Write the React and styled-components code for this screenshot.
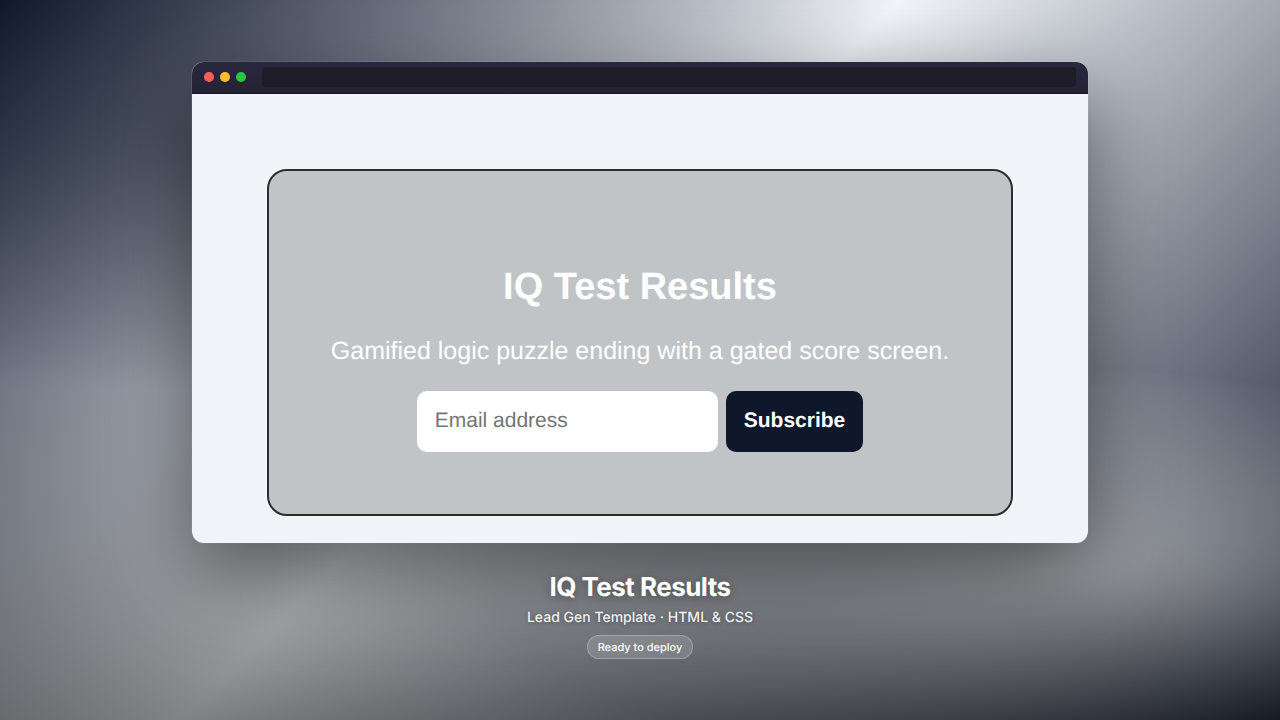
import React from "react";
import styled, { createGlobalStyle } from "styled-components";

const GlobalStyle = createGlobalStyle`
  *, *::before, *::after { box-sizing: border-box; }
  body { margin: 0; font-family: Inter, "Liberation Sans", sans-serif; }
`;

const Stage = styled.main`
  min-height: 100vh;
  display: flex;
  flex-direction: column;
  align-items: center;
  justify-content: center;
  text-rendering: geometricPrecision;
  background:
    linear-gradient(to top, rgba(0, 0, 0, 0.47), transparent 46%),
    radial-gradient(ellipse 44% 28% at 82% 79%, rgba(241, 245, 249, 0.8), transparent 100%),
    radial-gradient(ellipse 60% 34% at 20% 20%, rgba(15, 23, 42, 0.25), transparent 100%),
    linear-gradient(135deg, #0f172a 0%, #f1f5f9 45%, #0f172a 100%);
`;

const BrowserWindow = styled.section`
  width: 70%;
  border-radius: 12px;
  overflow: hidden;
  background: #f1f5f9;
  box-shadow: 0 30px 80px rgba(0, 0, 0, 0.5), 0 0 0 1px rgba(255, 255, 255, 0.1);
`;

const TitleBar = styled.header`
  height: 32px;
  padding: 0 12px;
  display: flex;
  align-items: center;
  gap: 6px;
  background: linear-gradient(#2a2840, #232133);
  border-bottom: 1px solid #171524;
`;

const Dot = styled.span`
  width: 10px;
  height: 10px;
  border-radius: 50%;
  background: ${({ $color }) => $color};
`;

const AddressBar = styled.div`
  flex: 1;
  height: 20px;
  margin-left: 10px;
  border-radius: 4px;
  background: #1e1c29;
`;

const Viewport = styled.div`
  padding: 75px 75px 27px;
`;

const Card = styled.form`
  display: flex;
  flex-direction: column;
  align-items: center;
  padding: 94px 40px 62px;
  border: 2px solid #2d2d2d;
  border-radius: 20px;
  background: #c1c4c7;
  color: #fff;
  font-family: "Liberation Sans", Arial, sans-serif;
`;

const CardTitle = styled.h1`
  margin: 0;
  font-size: 38px;
  line-height: 44px;
`;

const CardText = styled.p`
  margin: 27px 0 25px;
  font-size: 25px;
  line-height: 30px;
`;

const Fields = styled.div`
  display: flex;
  gap: 8px;
`;

const EmailInput = styled.input`
  width: 301px;
  height: 61px;
  padding: 0 18px;
  border: 0;
  border-radius: 10px;
  background: #fff;
  font: 21px "Liberation Sans", Arial, sans-serif;
  text-rendering: inherit;
  &::placeholder { color: #757575; }
`;

const SubscribeButton = styled.button`
  height: 61px;
  padding: 0 18px;
  border: 0;
  border-radius: 10px;
  background: #0f172a;
  color: #fff;
  font: bold 21px "Liberation Sans", Arial, sans-serif;
  text-rendering: inherit;
`;

const Caption = styled.footer`
  margin-top: 28px;
  display: flex;
  flex-direction: column;
  align-items: center;
  color: #fff;
  text-align: center;
`;

const CaptionTitle = styled.h2`
  margin: 0;
  font-size: 26px;
  line-height: 34px;
  font-weight: 700;
  letter-spacing: -0.02em;
  text-shadow: 0 2px 8px rgba(0, 0, 0, 0.3);
`;

const CaptionText = styled.p`
  margin: 3px 0 7px;
  font-size: 14px;
  line-height: 20px;
  font-weight: 500;
  color: rgba(255, 255, 255, 0.92);
  text-shadow: 0 1px 4px rgba(0, 0, 0, 0.3);
`;

const Badge = styled.span`
  padding: 4px 10px;
  border: 1px solid rgba(255, 255, 255, 0.25);
  border-radius: 12px;
  background: rgba(255, 255, 255, 0.15);
  font-size: 11px;
  line-height: 14px;
  font-weight: 500;
`;

export default function App() {
  return (
    <Stage>
      <GlobalStyle />
      <BrowserWindow>
        <TitleBar>
          <Dot $color="#ff5f57" />
          <Dot $color="#febc2e" />
          <Dot $color="#28c840" />
          <AddressBar />
        </TitleBar>
        <Viewport>
          <Card onSubmit={(event) => event.preventDefault()}>
            <CardTitle>IQ Test Results</CardTitle>
            <CardText>Gamified logic puzzle ending with a gated score screen.</CardText>
            <Fields>
              <EmailInput type="email" placeholder="Email address" aria-label="Email address" />
              <SubscribeButton type="submit">Subscribe</SubscribeButton>
            </Fields>
          </Card>
        </Viewport>
      </BrowserWindow>
      <Caption>
        <CaptionTitle>IQ Test Results</CaptionTitle>
        <CaptionText>Lead Gen Template · HTML &amp; CSS</CaptionText>
        <Badge>Ready to deploy</Badge>
      </Caption>
    </Stage>
  );
}
